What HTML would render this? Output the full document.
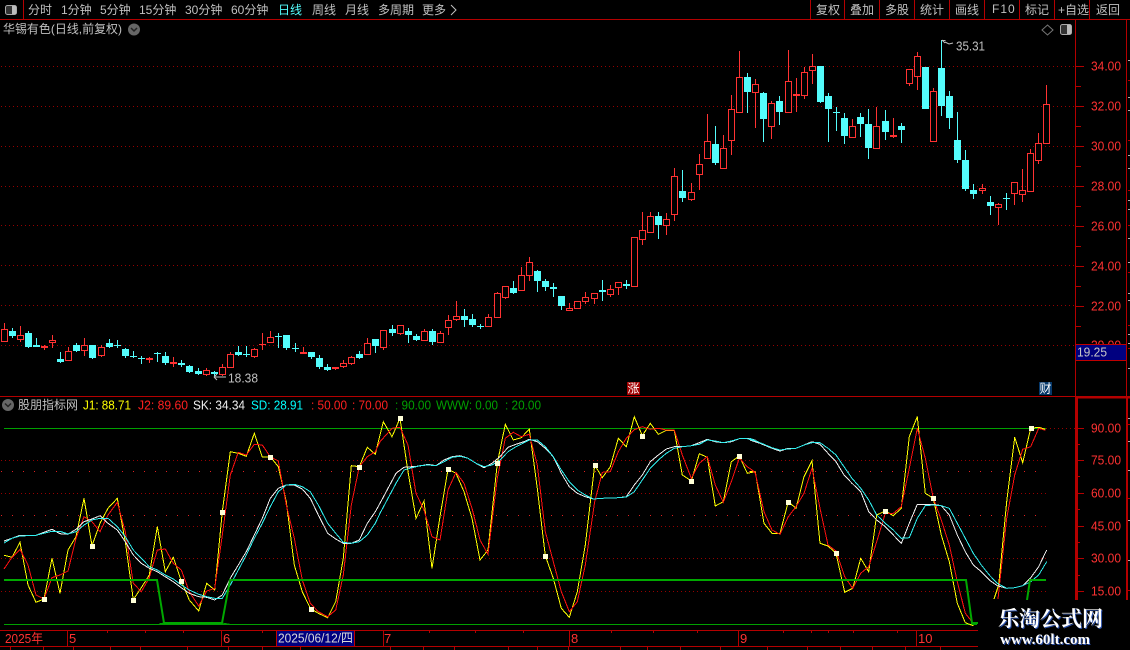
<!DOCTYPE html>
<html><head><meta charset="utf-8"><title>华锡有色</title>
<style>
html,body{margin:0;padding:0;background:#000;width:1130px;height:650px;overflow:hidden}
svg{position:absolute;left:0;top:0}
text{font-family:"Liberation Sans","WenQuanYi Zen Hei","Noto Sans CJK SC",sans-serif;font-size:12px;dominant-baseline:central}
.t{fill:#c0c0c0}
.ax{fill:#ff3232}
.ax text,text.n{font-size:13px}
#w1,#w2{position:absolute;color:#fff;white-space:nowrap;font-weight:bold;text-shadow:1px 1px 0 #2a4fa8}
#w1{left:998px;top:606px;font:bold 21px/24px "Noto Serif CJK SC","Liberation Serif",serif}
#w2{left:1000px;top:632px;font:bold 15px/16px "Liberation Serif",serif}
</style></head><body>
<svg id="s" width="1130" height="650" viewBox="0 0 1130 650">
<g id="grid"></g><g id="cand"></g><g id="curve"></g>
<g id="frame" shape-rendering="crispEdges"></g>

<!-- top bar -->
<rect x="5.5" y="5.5" width="11" height="9" rx="2" fill="#333" stroke="#aaa"/>
<rect x="12" y="6" width="4" height="8" fill="#bbb"/>
<g class="t">
<text x="28" y="10">分时</text>
<text x="61" y="10">1分钟</text>
<text x="100" y="10">5分钟</text>
<text x="139" y="10">15分钟</text>
<text x="185" y="10">30分钟</text>
<text x="231" y="10">60分钟</text>
<text x="278" y="10" style="fill:#54fcfc">日线</text>
<text x="312" y="10">周线</text>
<text x="345" y="10">月线</text>
<text x="378" y="10">多周期</text>
<text x="422" y="10">更多</text>
<text x="816" y="10">复权</text>
<text x="850" y="10">叠加</text>
<text x="885" y="10">多股</text>
<text x="920" y="10">统计</text>
<text x="955" y="10">画线</text>
<text x="992" y="9" letter-spacing="1">F10</text>
<text x="1025" y="10">标记</text>
<text x="1058" y="10">+自选</text>
<text x="1096" y="10">返回</text>
<text x="3" y="29" textLength="119" lengthAdjust="spacingAndGlyphs">华锡有色(日线,前复权)</text>
</g>
<path d="M451 5l5 5-5 5" fill="none" stroke="#c0c0c0"/>
<circle cx="134" cy="29.500" r="6" fill="#666"/><path d="M131 28l3 3 3-3" fill="none" stroke="#222" stroke-width="1.500"/>
<path d="M1047.500 25l5.500 5-5.500 5-5.500-5z" fill="none" stroke="#777"/>
<rect x="1060.500" y="24.500" width="11" height="10" rx="2" fill="#333" stroke="#aaa"/><rect x="1067" y="25" width="4" height="9" fill="#bbb"/>

<!-- hi/lo labels -->
<path d="M941.500 40.500h4M942 40l3 3M945 42l4 2 4-1" fill="none" stroke="#c0c0c0"/>
<text class="t n" x="956" y="46" textLength="29" lengthAdjust="spacingAndGlyphs">35.31</text>
<path d="M214 377l3-3M214 377l3 3M214 377h12" fill="none" stroke="#c0c0c0"/>
<text class="t n" x="228" y="378" textLength="30" lengthAdjust="spacingAndGlyphs">18.38</text>

<!-- right axis labels -->
<g class="ax">
<text x="1091" y="66" textLength="30" lengthAdjust="spacingAndGlyphs">34.00</text><text x="1091" y="106" textLength="30" lengthAdjust="spacingAndGlyphs">32.00</text><text x="1091" y="146" textLength="30" lengthAdjust="spacingAndGlyphs">30.00</text>
<text x="1091" y="186" textLength="30" lengthAdjust="spacingAndGlyphs">28.00</text><text x="1091" y="226" textLength="30" lengthAdjust="spacingAndGlyphs">26.00</text><text x="1091" y="266" textLength="30" lengthAdjust="spacingAndGlyphs">24.00</text>
<text x="1091" y="306" textLength="30" lengthAdjust="spacingAndGlyphs">22.00</text><text x="1091" y="345" textLength="30" lengthAdjust="spacingAndGlyphs">20.00</text>
<text x="1091" y="428" textLength="30" lengthAdjust="spacingAndGlyphs">90.00</text><text x="1091" y="460" textLength="30" lengthAdjust="spacingAndGlyphs">75.00</text><text x="1091" y="493" textLength="30" lengthAdjust="spacingAndGlyphs">60.00</text>
<text x="1091" y="526" textLength="30" lengthAdjust="spacingAndGlyphs">45.00</text><text x="1091" y="558" textLength="30" lengthAdjust="spacingAndGlyphs">30.00</text><text x="1091" y="591" textLength="30" lengthAdjust="spacingAndGlyphs">15.00</text>
</g>
<rect x="1076" y="345" width="50" height="15" fill="#000080"/>
<path d="M1076 344.500h50M1076 360.500h50" stroke="#c00000"/>
<text class="n" x="1077" y="352" fill="#c8c8c8" textLength="30" lengthAdjust="spacingAndGlyphs">19.25</text>

<!-- flags -->
<rect x="627" y="382" width="13" height="13" fill="#a00000"/>
<text x="627.500" y="388.500" fill="#fff">涨</text>
<rect x="1039" y="382" width="13" height="13" fill="#06386a"/>
<text x="1039.500" y="388.500" fill="#fff">财</text>

<!-- indicator header -->
<circle cx="8" cy="405" r="6" fill="#666"/><path d="M5 403.500l3 3 3-3" fill="none" stroke="#222" stroke-width="1.500"/>
<text class="t" x="18" y="405">股朋指标网</text>
<text class="n" x="83" y="405" fill="#ffff00" textLength="48" lengthAdjust="spacingAndGlyphs">J1: 88.71</text>
<text class="n" x="138" y="405" fill="#ff2020" textLength="50" lengthAdjust="spacingAndGlyphs">J2: 89.60</text>
<text class="n" x="193" y="405" fill="#f0f0f0" textLength="52" lengthAdjust="spacingAndGlyphs">SK: 34.34</text>
<text class="n" x="251" y="405" fill="#00ffff" textLength="52" lengthAdjust="spacingAndGlyphs">SD: 28.91</text>
<text class="n" x="311" y="405" fill="#ff2020" textLength="36" lengthAdjust="spacingAndGlyphs">: 50.00</text>
<text class="n" x="352" y="405" fill="#ff2020" textLength="36" lengthAdjust="spacingAndGlyphs">: 70.00</text>
<text class="n" x="395" y="405" fill="#00a000" textLength="36" lengthAdjust="spacingAndGlyphs">: 90.00</text>
<text class="n" x="436" y="405" fill="#00a000" textLength="62" lengthAdjust="spacingAndGlyphs">WWW: 0.00</text>
<text class="n" x="505" y="405" fill="#00a000" textLength="36" lengthAdjust="spacingAndGlyphs">: 20.00</text>

<!-- date row -->
<rect x="277" y="631" width="77" height="15" fill="#000080"/>
<path d="M276.500 630v16M354.500 630v16" stroke="#c00000"/>
<text class="n" x="5" y="638.500" fill="#ff3232" textLength="38" lengthAdjust="spacingAndGlyphs">2025年</text>
<text class="n" x="69" y="638.500" fill="#ff3232">5</text>
<text class="n" x="223" y="638.500" fill="#ff3232">6</text>
<text class="n" x="384" y="638.500" fill="#ff3232">7</text>
<text class="n" x="571" y="638.500" fill="#ff3232">8</text>
<text class="n" x="740" y="638.500" fill="#ff3232">9</text>
<text class="n" x="918" y="638.500" fill="#ff3232">10</text>
<text class="n" x="278" y="638" fill="#d8d8d8" textLength="75" lengthAdjust="spacingAndGlyphs">2025/06/12/四</text>

<!-- watermark mask -->
<rect x="978" y="600" width="152" height="50" fill="#000"/>
</svg>
<div id="w1">乐淘公式网</div>
<div id="w2">www.60lt.com</div>
<script>
var R='#ff3232',C='#54fcfc',F='#b40000';
function candles(ox,oy,d){var h='';d.forEach(function(a){
 var x=Math.floor(ox+a[0]/3),wt=Math.round(oy+a[1]/3),wb=Math.round(oy+a[2]/3),bt=Math.round(oy+a[3]/3),bb=Math.round(oy+a[4]/3),col=a[5]?C:R;
 h+='<rect x="'+x+'" y="'+wt+'" width="1" height="'+(wb-wt)+'" fill="'+col+'" shape-rendering="crispEdges"/>';
 if(a[5]||bb-bt<=2){h+='<rect x="'+(x-3)+'" y="'+bt+'" width="7" height="'+Math.max(bb-bt,1)+'" fill="'+col+'" shape-rendering="crispEdges"/>';}
 else{h+='<rect x="'+(x-2.5)+'" y="'+(bt+.5)+'" width="6" height="'+(bb-bt-1)+'" fill="#000" stroke="'+col+'" shape-rendering="crispEdges"/>';}
});document.getElementById('cand').innerHTML+=h;}
candles(0,310,[[13,40,95,58,95,0],[37,55,85,63,77,1],[61,48,95,76,90,0],[85,63,115,69,110,1],[109,85,112,105,110,1],[133,105,120,108,113,0],[157,75,115,91,98,0],[181,125,160,147,157,1],[205,112,153,124,152,0],[229,100,125,105,122,1],[253,85,138,106,124,0],[277,105,147,105,144,1],[304,105,140,112,137,0],[328,87,113,99,110,1],[352,90,115,104,106,1],[376,113,143,118,137,1],[400,123,145,138,141,1],[424,137,163,144,146,1],[448,140,158,144,149,0],[472,127,155,130,132,1],[496,127,165,138,158,1],[520,142,170,157,163,0],[544,150,170,159,164,1],[568,165,190,168,185,1],[596,175,195,183,191,1],[620,173,198,181,196,0],[644,183,198,187,193,1],[667,163,197,172,196,0],[691,127,174,133,173,0],[715,108,138,125,134,1],[739,108,140,132,134,1],[763,113,143,118,140,0],[787,70,120,102,106,0],[811,63,100,82,98,0],[835,70,113,77,80,1],[859,75,120,75,115,1],[885,100,125,114,116,1]]);
candles(290,310,[[40,110,132,126,131,0],[64,127,147,127,141,1],[88,135,177,145,171,1],[112,162,183,171,179,1],[136,170,179,172,178,0],[160,150,173,160,170,0],[184,138,165,142,161,0],[208,123,147,132,144,1],[232,84,134,100,134,0]]);
candles(300,240,[[227,297,340,297,318,1],[250,271,330,271,323,0],[277,255,288,267,278,1],[301,256,285,256,281,0],[325,265,308,273,285,1],[349,282,303,288,300,1],[373,268,303,274,302,0],[397,268,315,274,306,1],[421,274,308,280,308,0],[445,225,285,241,263,0],[469,183,243,229,239,0],[493,207,261,228,240,1],[517,222,261,237,255,1],[541,252,267,258,260,1],[565,222,261,232,260,0],[592,157,234,160,233,0],[616,138,176,139,173,0],[640,123,162,144,159,1],[664,81,153,106,152,0],[688,51,123,67,107,0],[712,90,156,93,123,1],[736,117,153,123,141,1],[760,129,171,141,147,1],[784,168,210,168,198,1],[808,190,213,205,212,0],[832,184,208,184,206,0],[856,156,192,172,186,0],[883,160,192,160,177,0],[907,120,183,150,156,1],[931,135,171,148,164,0],[955,127,165,127,143,0],[979,120,147,132,138,1],[1003,-10,141,-10,140,0]]);
candles(630,50,[[37,487,585,541,570,0],[61,487,548,499,548,0],[85,487,567,498,525,1],[109,489,555,508,527,0],[133,354,513,379,494,0],[157,360,456,423,444,1],[184,399,453,427,449,0],[208,312,420,343,374,0],[232,192,327,274,326,0],[256,228,345,282,339,1],[280,255,357,295,356,0],[304,135,315,178,272,0],[328,3,189,82,188,0],[352,69,189,81,126,1],[376,87,234,103,128,0],[400,126,276,129,207,1],[424,153,267,160,230,0],[448,138,225,153,186,1],[475,0,189,94,188,0],[499,84,186,132,137,0],[523,51,147,67,137,0],[547,12,102,49,62,0],[571,48,159,48,156,1],[595,129,276,138,177,1],[619,171,243,186,188,1],[643,189,282,204,258,1],[667,207,264,229,263,0],[691,189,261,201,222,1],[715,177,327,222,294,1],[739,171,297,229,296,0]]);
candles(880,50,[[16,180,270,213,246,1],[40,204,264,255,260,0],[64,219,279,228,240,1],[88,57,108,57,101,0],[112,6,120,19,80,0],[136,51,177,51,177,1],[160,114,276,124,275,0],[184,-30,198,54,168,1],[208,123,237,138,204,1],[232,186,339,270,330,1],[256,300,423,330,417,1],[280,402,447,420,432,1],[307,402,432,415,423,0],[331,438,495,456,468,1],[355,459,525,462,473,0],[379,429,480,444,447,1],[403,397,465,397,431,0],[427,357,456,421,434,0],[451,297,426,310,425,0],[475,249,342,280,332,0],[499,105,282,163,281,0]]);

function pl(g,ox,a,col,w){var p=[];for(var i=0;i<a.length;i+=2)p.push((ox+a[i]/3).toFixed(1)+','+(395+a[i+1]/3).toFixed(1));
 return '<polyline points="'+p.join(' ')+'" fill="none" stroke="'+col+'" stroke-width="'+(w||1)+'" shape-rendering="crispEdges"/>';}
var c='';
var Y='#ffff00',RD='#ff1010',W='#f0f0f0',CY='#30f0f0';
// yellow
c+=pl(0,0,[12,481,36,487,60,442,84,570,108,622,132,612,156,490,180,595,204,465,228,425,252,310,276,452,300,385,324,340,352,310,376,440,400,614,424,578,448,540,472,395,496,530,520,487,544,558,568,615,596,648,620,565,644,585,667,350,691,170,715,175,739,184,763,115,787,186,811,185,835,215,859,320,883,510,907,590,931,640,955,655,983,668,1007,620,1030,490,1054,212,1078,215,1102,157,1126,178,1140,120],Y);
c+=pl(0,380,[0,120,10,80,36,125,60,70,84,230,108,370,132,318,156,520,180,365,204,223,228,235,252,290,276,370,300,495,324,465,352,205,376,88,400,135,424,128,448,102,472,280,496,482,520,550,544,640,568,667,592,590,616,450,644,210,667,248,691,215,715,130,739,155,763,65,787,122,811,85,835,118,859,106,883,106,907,240,934,258,958,176,982,187,1006,333,1030,320,1054,200,1078,183,1102,235,1126,230],Y);
c+=pl(0,750,[0,230,16,230,42,385,66,415,90,415,115,320,138,340,162,245,186,197,210,445,234,453,258,475,284,592,308,580,332,490,356,530,380,360,406,348,430,362,454,340,478,125,502,65,526,295,550,310,574,420,598,500,622,625,646,683,670,692],Y);
c+=pl(0,750,[732,612,746,570,770,320,794,127,818,203,842,100,866,97,886,103],Y);
// red
c+=pl(0,0,[12,522,36,487,60,463,84,510,108,600,132,612,156,548,180,540,204,528,228,430,252,365,276,380,300,410,324,360,352,322,376,410,400,565,424,590,448,548,472,465,496,462,520,505,544,525,568,590,596,633,620,588,644,580,667,420,691,240,715,172,739,180,763,148,787,150,811,185,835,198,859,330,883,430,907,555,931,625,955,650,983,665,1007,645,1030,540,1054,330,1078,215,1102,185,1126,170,1140,140],RD);
c+=pl(0,380,[0,140,36,100,60,97,84,150,108,295,132,345,156,425,180,435,204,285,228,232,252,265,276,340,300,435,324,478,352,250,376,130,400,112,424,125,448,118,472,210,496,410,520,500,544,590,568,650,592,620,616,510,644,320,667,232,691,230,715,170,739,130,763,104,787,95,811,103,835,100,859,105,883,105,907,180,934,250,958,205,982,185,1006,270,1030,322,1054,260,1078,190,1102,215,1126,232],RD);
c+=pl(0,750,[0,220,16,235,42,350,66,405,90,418,115,365,138,335,162,295,186,220,210,340,234,450,258,468,284,545,308,580,332,535,356,515,380,440,406,355,430,355,454,335,478,220,502,100,526,190,550,310,574,375,598,450,622,560,646,655,670,685],RD);
c+=pl(0,750,[744,612,770,370,794,240,818,163,842,155,866,100,886,106],RD);
// white
c+=pl(0,0,[12,438,36,430,60,421,108,421,156,403,180,416,204,418,228,403,252,380,276,372,300,362,324,385,352,405,376,440,400,480,424,505,448,520,472,530,496,545,520,560,544,578,568,595,596,605,620,607,644,615,667,600,691,550,715,510,739,470,763,420,787,370,811,310,835,280,859,270,883,270,907,282,931,310,955,360,983,415,1007,432,1030,445,1054,445,1078,435,1102,385,1126,350,1140,325],W);
c+=pl(0,380,[0,325,24,280,48,235,72,217,96,215,120,213,144,208,168,212,192,195,216,185,240,182,264,190,288,205,312,218,336,205,360,185,384,157,408,148,432,140,448,133,472,140,496,160,520,185,544,235,568,275,592,295,616,305,640,312,667,310,715,308,739,305,763,270,787,240,811,200,835,180,859,162,883,155,907,155,934,152,958,143,982,133,1006,140,1030,143,1054,140,1078,131,1102,130,1126,135],W);
c+=pl(0,750,[0,135,30,145,66,160,90,168,114,160,138,160,162,150,186,140,210,148,234,175,258,200,282,240,306,265,332,290,356,350,380,375,406,395,430,420,454,445,478,385,502,328,526,328,550,328,574,332,598,360,622,420,646,470,670,510,694,530,718,555,742,572,770,580,794,578,818,572,842,548,866,515,890,465],W);
// cyan
c+=pl(0,0,[12,444,36,430,60,423,108,421,132,415,156,409,180,409,204,417,228,410,252,390,276,375,300,370,324,370,352,395,376,425,400,465,424,490,448,515,472,525,496,540,520,552,544,570,568,585,596,598,620,605,644,610,667,610,691,570,715,525,739,480,763,430,787,385,811,335,835,290,859,270,883,268,907,275,931,290,955,330,983,385,1007,415,1030,442,1054,445,1078,440,1102,420,1126,385,1140,355],CY);
c+=pl(0,380,[0,355,24,310,48,265,72,225,96,218,120,212,144,210,168,212,192,200,216,187,240,184,264,190,288,205,312,215,336,210,360,195,384,170,408,155,432,143,448,135,472,135,496,155,520,185,544,225,568,260,592,285,616,300,640,312,667,310,715,308,739,306,763,290,787,255,811,220,835,195,859,175,883,160,907,155,934,152,958,148,982,135,1006,138,1030,143,1054,138,1078,131,1102,131,1126,138],CY);
c+=pl(0,750,[0,130,30,143,66,158,90,165,114,162,138,160,162,150,186,143,210,143,234,160,258,180,282,215,306,250,332,280,356,315,380,360,406,385,430,405,454,430,478,428,502,370,526,332,550,330,574,332,598,340,622,385,646,430,670,475,694,510,718,540,742,565,770,580,794,578,818,572,842,560,866,540,890,500],CY);
// thick green
c+='<polyline points="4,580 157,580 164,623 222,623 230,580 966,580 972,623 978,623" fill="none" stroke="#00a800" stroke-width="2" stroke-linejoin="miter"/>';
c+='<polyline points="1027,600 1030,580 1046,580" fill="none" stroke="#00a800" stroke-width="2"/>';
// markers
var mk='';[[0,133,612],[0,277,452],[0,400,614],[0,544,558],[0,667,350],[0,811,185],[0,934,641],[0,1078,215],[380,61,70],[380,205,223],[380,352,205],[380,496,482],[380,644,210],[380,787,122],[380,934,258],[380,1078,183],[750,115,320],[750,258,475],[750,406,348],[750,550,310],[750,842,100]].forEach(function(m){
 mk+='<rect x="'+Math.round(m[0]+m[1]/3-2)+'" y="'+Math.round(395+m[2]/3-2)+'" width="5" height="5" fill="#ffffd8" shape-rendering="crispEdges"/>';});
document.getElementById('curve').innerHTML=c+mk;

// grid: explicit 1px dots
function dots(y,x0,x1,step,col){var d='';for(var x=x0;x<x1;x+=step)d+='M'+x+' '+y+'h1v1h-1z';return '<path d="'+d+'" fill="'+col+'" shape-rendering="crispEdges"/>';}
var g='';
[66,106,146,186,225,265,305,345].forEach(function(y){g+=dots(y,1,1075,4,'#960000');});
[460,493,526,558,591].forEach(function(y){g+=dots(y,1,1046,4,'#960000');});
[471,515].forEach(function(y){g+=dots(y,1,1046,11,'#e02020');});
g+=dots(428,1046,1075,4,'#960000');
g+='<path d="M4 428.500H1046M4 624.500H977M159 624l5-1M222 623l9 1.500" stroke="#00a000" fill="none" shape-rendering="crispEdges"/>';
document.getElementById('grid').innerHTML=g;

// frame
var f='',L=function(x1,y1,x2,y2,col,w){f+='<line x1="'+x1+'" y1="'+y1+'" x2="'+x2+'" y2="'+y2+'" stroke="'+(col||F)+'" stroke-width="'+(w||1)+'"/>';};
L(0,19.5,1130,19.5);
L(23.5,0,23.5,19);
[810,844,879,914,949,984,1019,1054,1089].forEach(function(x){L(x+.5,0,x+.5,19);});
L(1075.5,20,1075.5,397);L(1126.5,20,1126.5,397);
L(0,396.5,1130,396.5,F,1);L(1076,397.5,1130,397.5,F,2);
L(1076.5,397,1076.5,600,F,3);L(1127,397,1127,600,F,2);
for(var y=66,i=0;y<346;y+=20,i++){L(1076,y+.5,1081+(i%2?0:3),y+.5);}
[428,460,493,526,558,591].forEach(function(y){L(1076,y+.5,1084,y+.5);});
[444,476,509,542,575].forEach(function(y){L(1076,y+.5,1080,y+.5);});
[60,80,97,110,140,155,168,190,200,209,225,238,262,272,293,300,325,334,343,348,368,418,424,441,470,498,520,560,590].forEach(function(y,i){L(1128,y+.5,1130,y+.5,i%3==1?F:'#b0b0b0');});
L(0,630.5,978,630.5);L(0,646.5,978,646.5);
[67,221,383,569,738,916].forEach(function(x){L(x+.5,630,x+.5,646);});
[107,145,183,262,429,475,523,611,653,697,811,853,897,783,828].forEach(function(x){L(x+.5,631,x+.5,633);});
[10,43,73,110,140,187,228,262,300,390,423,454,508,537,568,620,647,680,720,767,807,840,872,905,940].forEach(function(x){L(x+.5,647,x+.5,650);});
document.getElementById('frame').innerHTML=f;
</script>
</body></html>
